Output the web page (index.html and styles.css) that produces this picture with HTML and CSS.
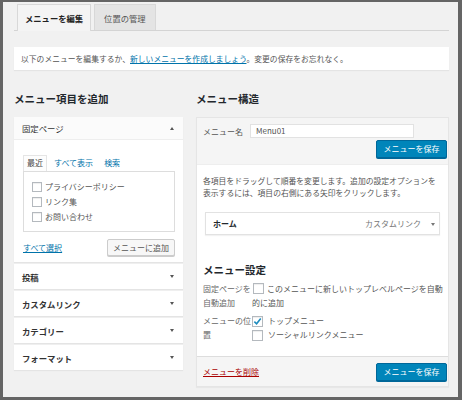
FILE: index.html
```html
<!DOCTYPE html>
<html lang="ja">
<head>
<meta charset="utf-8">
<title>メニュー</title>
<link rel="stylesheet" href="styles.css">
</head>
<body>
<div class="frame">
  <div class="tabs">
    <span class="tab active">メニューを編集</span>
    <span class="tab">位置の管理</span>
  </div>
  <div class="notice">以下のメニューを編集するか、<a href="#">新しいメニューを作成しましょう</a>。変更の保存をお忘れなく。</div>
  <div class="cols">
    <div class="left">
      <h2 class="heading">メニュー項目を追加</h2>
      <div class="acc">
        <div class="acc-item">
          <div class="acc-head first">固定ページ<span class="arr up"></span></div>
          <div class="acc-body">
            <div class="subtabs">
              <span class="st active">最近</span>
              <a class="st" href="#">すべて表示</a>
              <a class="st" href="#">検索</a>
            </div>
            <div class="checklist">
              <label class="ck-row"><span class="cb"></span>プライバシーポリシー</label>
              <label class="ck-row"><span class="cb"></span>リンク集</label>
              <label class="ck-row"><span class="cb"></span>お問い合わせ</label>
            </div>
            <div class="acc-actions">
              <a href="#" class="sel-all">すべて選択</a>
              <span class="btn">メニューに追加</span>
            </div>
          </div>
        </div>
        <div class="acc-item"><div class="acc-head bold">投稿<span class="arr"></span></div></div>
        <div class="acc-item"><div class="acc-head bold">カスタムリンク<span class="arr"></span></div></div>
        <div class="acc-item"><div class="acc-head bold">カテゴリー<span class="arr"></span></div></div>
        <div class="acc-item"><div class="acc-head bold">フォーマット<span class="arr"></span></div></div>
      </div>
    </div>
    <div class="right">
      <h2 class="heading">メニュー構造</h2>
      <div class="mbox">
        <div class="mhead">
          <div class="name-row">
            <span class="name-label">メニュー名</span>
            <span class="name-input">Menu01</span>
          </div>
          <div class="save-row"><span class="btn-primary">メニューを保存</span></div>
        </div>
        <div class="mbody">
          <p class="desc">各項目をドラッグして順番を変更します。追加の設定オプションを<br>表示するには、項目の右側にある矢印をクリックします。</p>
          <div class="mitem">
            <span class="mitem-title">ホーム</span>
            <span class="mitem-type">カスタムリンク<span class="arr small"></span></span>
          </div>
          <h3 class="sub-heading">メニュー設定</h3>
          <div class="set-row">
            <div class="set-label">固定ページを<br>自動追加</div>
            <div class="set-field"><span class="cb inline"></span>このメニューに新しいトップレベルページを自動<br>的に追加</div>
          </div>
          <div class="set-row">
            <div class="set-label">メニューの位<br>置</div>
            <div class="set-field">
              <div class="opt"><span class="cb checked"><svg viewBox="0 0 10 10" width="9" height="9"><path d="M1.5 5.2 L4 7.6 L8.6 1.8" fill="none" stroke="#1e8cbe" stroke-width="1.8"/></svg></span>トップメニュー</div>
              <div class="opt"><span class="cb"></span>ソーシャルリンクメニュー</div>
            </div>
          </div>
        </div>
        <div class="mfoot">
          <a href="#" class="delete">メニューを削除</a>
          <span class="btn-primary">メニューを保存</span>
        </div>
      </div>
    </div>
  </div>
</div>
</body>
</html>
```
FILE: styles.css
```css
html, body {
  margin: 0;
  padding: 0;
}

.frame {
  width: 462px;
  height: 400px;
  box-sizing: border-box;
  border: 3px solid #656565;
  border-top-width: 2px;
  border-right-width: 4px;
  background: #f1f1f1;
  padding: 2px 9px 0 11px;
  font-family: "Noto Sans CJK JP", "Noto Sans", sans-serif;
  font-size: 8px;
  color: #444;
  overflow: hidden;
}

a {
  color: #0073aa;
}

/* tabs */
.tabs {
  display: flex;
  gap: 3px;
  padding-left: 3px;
  border-bottom: 1px solid #d4d4d4;
  height: 26px;
}

.tab {
  box-sizing: border-box;
  height: 26px;
  padding: 6px 9px 0;
  line-height: 14px;
  font-size: 8.3px;
  font-weight: normal;
  color: #555;
  background: #e4e4e4;
  border: 1px solid #d8d8d8;
  border-bottom: none;
}

.tab.active {
  background: #f4f4f4;
  color: #222;
  font-weight: bold;
  padding: 6px 7px 0;
  height: 27px;
}

/* notice */
.notice {
  margin-top: 16px;
  height: 23px;
  line-height: 23px;
  background: #fff;
  padding-left: 7px;
  font-size: 7.8px;
  color: #555;
  box-shadow: 0 1px 1px rgba(0, 0, 0, 0.05);
}

/* columns */
.cols {
  display: flex;
  gap: 13px;
  margin-top: 22px;
}

.left {
  width: 169px;
}

.right {
  width: 253px;
}

.heading {
  margin: 0 0 11px;
  font-size: 10.5px;
  line-height: 14px;
  font-weight: bold;
  color: #23282d;
}

/* accordion */
.acc {
  display: flex;
  flex-direction: column;
  gap: 2px;
}

.acc-item {
  background: #fff;
  box-shadow: 0 1px 1px rgba(0, 0, 0, 0.05);
}

.acc-head {
  box-sizing: border-box;
  height: 25px;
  display: flex;
  align-items: center;
  justify-content: space-between;
  padding: 0 9px 0 8px;
  font-size: 8.4px;
  color: #23282d;
}

.acc-head.first {
  height: 23px;
  background: #fbfbfb;
  border-bottom: 1px solid #eee;
  font-weight: normal;
  color: #333;
}

.acc-head.bold {
  font-weight: bold;
  color: #333;
}

.arr {
  width: 0;
  height: 0;
  border-left: 2.5px solid transparent;
  border-right: 2.5px solid transparent;
  border-top: 3px solid #555;
}

.arr.up {
  border-top: none;
  border-bottom: 3px solid #555;
}

.arr.small {
  display: inline-block;
  margin-left: 10px;
  vertical-align: middle;
  border-top-color: #777;
}

.acc-body {
  padding: 15px 8px 6px 9px;
}

.subtabs {
  display: flex;
  gap: 3px;
  height: 16px;
  align-items: stretch;
}

.st {
  padding: 1px 4px 0;
  line-height: 14px;
  text-decoration: none;
  color: #0073aa;
}

.st.active {
  color: #444;
  border: 1px solid #e5e5e5;
  border-bottom: none;
  padding: 0 3px;
  background: #fdfdfd;
}

.checklist {
  border: 1px solid #ddd;
  padding: 7px 8px;
}

.ck-row {
  display: flex;
  align-items: center;
  height: 15px;
  color: #555;
}

.cb {
  display: inline-flex;
  align-items: center;
  justify-content: center;
  box-sizing: border-box;
  width: 10px;
  height: 10px;
  border: 1px solid #b4b9be;
  background: #fff;
  margin-right: 3px;
  flex: none;
  box-shadow: inset 0 1px 1px rgba(0, 0, 0, 0.07);
}

.cb.inline {
  width: 11px;
  height: 11px;
  vertical-align: -2px;
  margin-right: 3px;
  margin-left: 1px;
}

.acc-actions {
  margin-top: 7px;
  display: flex;
  justify-content: space-between;
  align-items: center;
}

.sel-all {
  font-size: 8px;
}

.btn {
  box-sizing: border-box;
  width: 68px;
  height: 17px;
  line-height: 15px;
  text-align: center;
  border: 1px solid #ccc;
  background: #f7f7f7;
  border-radius: 2px;
  color: #555;
  box-shadow: 0 1px 0 #ccc;
}

/* menu structure box */
.mbox {
  border: 1px solid #e5e5e5;
  box-shadow: 0 1px 1px rgba(0, 0, 0, 0.04);
  background: #fff;
}

.mhead {
  background: #f5f5f5;
  padding: 6px 1px 6px 6px;
  border-bottom: 1px solid #eee;
}

.name-row {
  display: flex;
  align-items: center;
  height: 14px;
}

.name-label {
  width: 47px;
  color: #555;
}

.name-input {
  box-sizing: border-box;
  width: 164px;
  height: 14px;
  line-height: 12px;
  background: #fff;
  border: 1px solid #e2e2e2;
  padding-left: 5px;
  color: #555;
}

.save-row {
  margin-top: 2px;
  display: flex;
  justify-content: flex-end;
}

.btn-primary {
  box-sizing: border-box;
  width: 71px;
  height: 18px;
  line-height: 16px;
  text-align: center;
  background: #0085ba;
  border: 1px solid #006799;
  border-radius: 2px;
  color: #fff;
  box-shadow: 0 1px 0 #006799;
}

.mbody {
  padding: 10px 2px 10px 6px;
}

.desc {
  margin: 0;
  line-height: 12px;
  font-size: 7.8px;
  color: #555;
  white-space: nowrap;
}

.mitem {
  box-sizing: border-box;
  margin: 13px 2px 0 2px;
  width: 235px;
  height: 23px;
  border: 1px solid #e2e2e2;
  box-shadow: 0 1px 1px rgba(0, 0, 0, 0.05);
  display: flex;
  align-items: center;
  justify-content: space-between;
  padding: 0 4px 0 7px;
}

.mitem-title {
  font-weight: bold;
  color: #23282d;
}

.mitem-type {
  color: #777;
}

.sub-heading {
  margin: 28px 0 5px;
  font-size: 10.5px;
  line-height: 14px;
  font-weight: bold;
  color: #23282d;
}

.set-row {
  display: grid;
  grid-template-columns: 49px 1fr;
  line-height: 14px;
  margin-bottom: 4px;
  white-space: nowrap;
}

.set-label {
  color: #666;
}

.set-field {
  color: #555;
}

.opt {
  display: flex;
  align-items: center;
  height: 14px;
}

.opt .cb {
  width: 11px;
  height: 11px;
  margin-right: 5px;
}

.mfoot {
  background: #f5f5f5;
  border-top: 1px solid #ddd;
  height: 30px;
  box-sizing: border-box;
  padding: 0 1px 0 6px;
  display: flex;
  align-items: center;
  justify-content: space-between;
}

.delete {
  color: #a00;
}
```
